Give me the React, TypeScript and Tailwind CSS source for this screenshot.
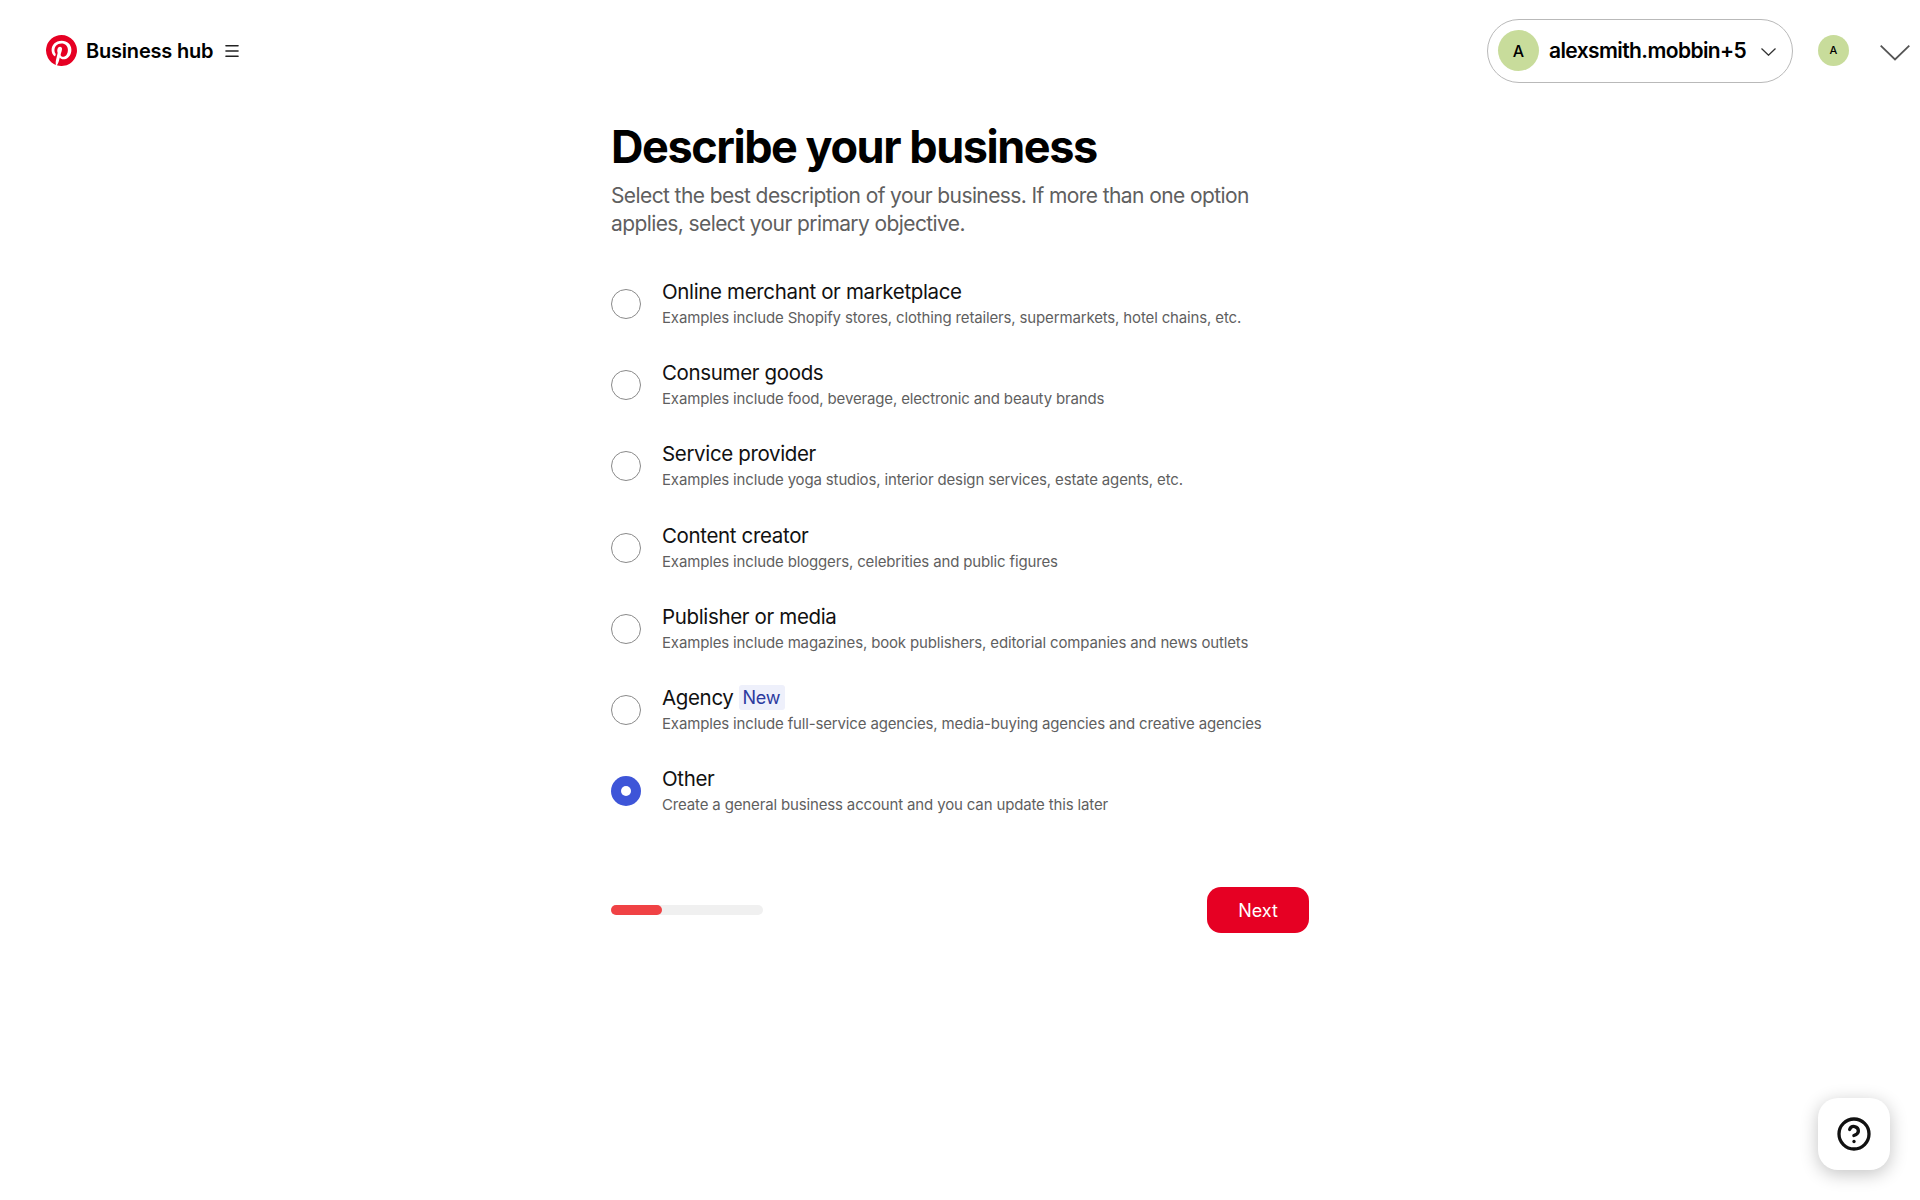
import { CircleHelp, Menu } from 'lucide-react';

const options = [
  { title: 'Online merchant or marketplace', desc: 'Examples include Shopify stores, clothing retailers, supermarkets, hotel chains, etc.' },
  { title: 'Consumer goods', desc: 'Examples include food, beverage, electronic and beauty brands' },
  { title: 'Service provider', desc: 'Examples include yoga studios, interior design services, estate agents, etc.' },
  { title: 'Content creator', desc: 'Examples include bloggers, celebrities and public figures' },
  { title: 'Publisher or media', desc: 'Examples include magazines, book publishers, editorial companies and news outlets' },
  { title: 'Agency', desc: 'Examples include full-service agencies, media-buying agencies and creative agencies', isNew: true },
  { title: 'Other', desc: 'Create a general business account and you can update this later', selected: true },
];

const PinterestLogo = () => (
  <svg viewBox="0 0 24 24" className="w-[31px] h-[31px]" fill="#e60023">
    <path d="M12 0a12 12 0 0 0-4.37 23.17c-.1-.95-.2-2.4.04-3.44l1.4-5.96s-.35-.72-.35-1.78c0-1.67.97-2.92 2.17-2.92 1.02 0 1.52.77 1.52 1.69 0 1.03-.66 2.57-1 4-.28 1.2.6 2.17 1.78 2.17 2.13 0 3.77-2.25 3.77-5.5 0-2.87-2.06-4.88-5.01-4.88-3.41 0-5.42 2.56-5.42 5.21 0 1.03.4 2.14.9 2.74.1.12.11.22.08.34l-.33 1.36c-.05.22-.18.27-.41.16-1.5-.7-2.43-2.89-2.43-4.65 0-3.78 2.75-7.26 7.92-7.26 4.16 0 7.39 2.97 7.39 6.93 0 4.13-2.61 7.46-6.23 7.46-1.21 0-2.36-.63-2.75-1.38l-.75 2.85c-.27 1.04-1 2.35-1.49 3.15A12 12 0 1 0 12 0z" />
  </svg>
);

const Radio = ({ selected }: { selected?: boolean }) =>
  selected ? (
    <div className="w-[30px] h-[30px] rounded-full bg-[#3e55d8] flex items-center justify-center shrink-0">
      <div className="w-[10px] h-[10px] rounded-full bg-white"></div>
    </div>
  ) : (
    <div className="w-[30px] h-[30px] rounded-full border border-[#8a8a8a] bg-white shrink-0"></div>
  );

export default function App() {
  return (
    <div className="relative min-h-[1200px] bg-white text-black font-['Inter',sans-serif] overflow-hidden">
      {/* Header */}
      <header className="h-[101px] flex items-center pl-[46px] pr-[10px]">
        <PinterestLogo />
        <span className="ml-[9px] text-[20px] font-semibold tracking-[-0.2px]">Business hub</span>
        <Menu className="ml-[10px] w-[18px] h-[18px] text-[#222]" strokeWidth={2.2} />

        <div className="ml-auto flex items-center">
          <div className="w-[306px] h-[64px] rounded-full border border-[#b9b9b9] flex items-center pl-[10px]">
            <div className="w-[41px] h-[41px] rounded-full bg-[#c8dc9b] flex items-center justify-center text-[16px] font-medium">A</div>
            <span className="ml-[10px] text-[21px] font-semibold tracking-[-0.6px]">alexsmith.mobbin+5</span>
            <svg viewBox="0 0 15 8" className="ml-[15px] mt-[3px] w-[15px] h-[8px] text-[#333]" fill="none" stroke="currentColor" strokeWidth={1.3}>
              <path d="M0.5 0.5 L7.5 7.2 L14.5 0.5" />
            </svg>
          </div>
          <div className="ml-[25px] w-[31px] h-[31px] rounded-full bg-[#c8dc9b] flex items-center justify-center text-[11px] font-medium">A</div>
          <svg viewBox="0 0 30 16" className="ml-[31px] mt-[4px] w-[30px] h-[16px] text-[#555]" fill="none" stroke="currentColor" strokeWidth={1.8}>
            <path d="M0.7 0.7 L15 14.5 L29.3 0.7" />
          </svg>
        </div>
      </header>

      {/* Form */}
      <main className="w-[698px] mx-auto">
        <h1 className="text-[45px] leading-[54px] font-bold tracking-[-1.45px] mt-[19px]">Describe your business</h1>
        <p className="mt-[8px] w-[660px] text-[21px] leading-[28px] tracking-[-0.6px] text-[#5f5f5f]">
          Select the best description of your business. If more than one option applies, select your primary objective.
        </p>

        <div className="mt-[39px] flex flex-col gap-[27.2px]">
          {options.map((o) => (
            <div key={o.title} className="flex items-center h-[54px]">
              <Radio selected={o.selected} />
              <div className="ml-[21px] mb-[2px]">
                <div className="flex items-center h-[30px]">
                  <span className="text-[20.5px] leading-[30px] tracking-[-0.35px] text-[#111]">{o.title}</span>
                  {o.isNew && (
                    <span className="ml-[5px] pl-[4px] pr-[5px] h-[25px] leading-[25px] rounded-[3px] bg-[#eef0fb] text-[#2b3a9f] text-[18px] tracking-[-0.3px]">New</span>
                  )}
                </div>
                <div className="text-[15px] leading-[22px] tracking-[-0.15px] text-[#5f5f5f]">{o.desc}</div>
              </div>
            </div>
          ))}
        </div>

        <div className="mt-[69px] flex items-center justify-between">
          <div className="w-[152px] h-[10px] rounded-full bg-[#f0f0f0]">
            <div className="w-[51px] h-[10px] rounded-full bg-[#f04245]"></div>
          </div>
          <button className="w-[102px] h-[46px] rounded-[14px] bg-[#e60023] text-white text-[18px] font-normal">Next</button>
        </div>
      </main>

      {/* Help button */}
      <button className="absolute left-[1818px] top-[1098px] w-[72px] h-[72px] rounded-[20px] bg-white shadow-[0_4px_18px_rgba(0,0,0,0.24)] flex items-center justify-center">
        <CircleHelp className="w-[36px] h-[36px] text-[#111]" strokeWidth={2.2} />
      </button>
    </div>
  );
}
